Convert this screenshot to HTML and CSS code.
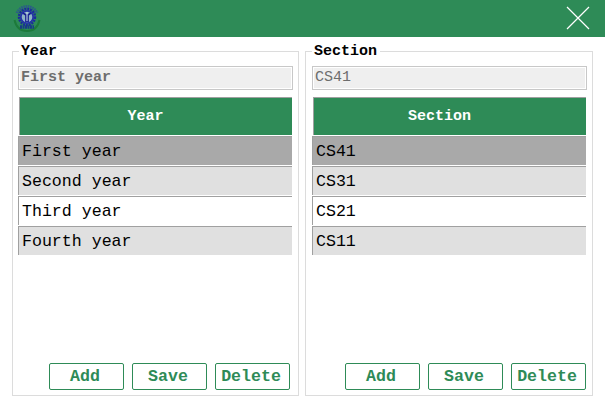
FILE: index.html
```html
<!DOCTYPE html>
<html lang="en">
<head>
<meta charset="utf-8">
<title>Year and Section</title>
<link rel="stylesheet" href="styles.css">
</head>
<body>
<header class="bar">
  <svg class="logo" width="28" height="30" viewBox="0 0 28 30" fill="none">
    <path d="M1.5 17C3 24 7 28 14 28S25 24 26.5 17" stroke="#1d7a3a" stroke-width="2"/>
    <path d="M4 10A11 11 0 0 1 24 10" stroke="#2b5c88" stroke-width="3" stroke-dasharray="1.5 .7"/>
    <circle cx="14" cy="14" r="8" stroke="#1c2a9c" stroke-width="2.4" stroke-dasharray="2 .9"/>
    <circle cx="14" cy="14" r="6.2" fill="#8fb5c4" stroke="#2434a8" stroke-width="1.8"/>
    <path d="M10 10l3 2v7M18 10l-3 2v7" stroke="#1a2393" stroke-width="1.8"/>
    <path d="M14 9v9" stroke="#c5dde0" stroke-width="1"/>
    <path d="M7 24h14" stroke="#173b87" stroke-width="3.4" stroke-dasharray="2 .5"/>
  </svg>
  <svg class="close" width="24" height="24" viewBox="0 0 24 24" fill="none" stroke="#fff" stroke-width="1.2"><path d="M1 1l22 22M23 1L1 23"/></svg>
</header>
<main class="panels">
  <fieldset class="panel">
    <legend>Year</legend>
    <input class="field strong" value="First year" disabled>
    <div class="table">
      <div class="head">Year</div>
      <div class="row selected">First year</div>
      <div class="row alt">Second year</div>
      <div class="row">Third year</div>
      <div class="row alt">Fourth year</div>
    </div>
    <div class="actions"><button>Add</button><button>Save</button><button>Delete</button></div>
  </fieldset>
  <fieldset class="panel second">
    <legend>Section</legend>
    <input class="field" value="CS41" disabled>
    <div class="table">
      <div class="head">Section</div>
      <div class="row selected">CS41</div>
      <div class="row alt">CS31</div>
      <div class="row">CS21</div>
      <div class="row alt">CS11</div>
    </div>
    <div class="actions"><button>Add</button><button>Save</button><button>Delete</button></div>
  </fieldset>
</main>
</body>
</html>
```
FILE: styles.css
```css
* { box-sizing: border-box; }
body {
  margin: 0;
  background: #fff;
  font-family: "Courier New", "Liberation Mono", monospace;
  color: #000;
  overflow: hidden;
}
.bar {
  height: 37px;
  padding: 0 15px 0 13px;
  background: #2e8b57;
  display: flex;
  align-items: center;
  justify-content: space-between;
}
.logo { margin-top: -2px; }
.close { margin-top: -2px; }
.panels {
  display: grid;
  grid-template-columns: 287px 288px;
  gap: 6px;
  padding: 6px 12px 0;
}
.panel {
  height: 353px;
  min-width: 0;
  margin: 0;
  padding: 0 5px;
  border: 1px solid #dcdcdc;
}
.second { padding-left: 6px; }
legend {
  height: 16px;
  margin-left: 1px;
  padding: 1px 3px 0 2px;
  font-size: 15px;
  font-weight: bold;
  line-height: 16px;
}
.second legend { margin-left: 0; }
.field {
  display: block;
  width: 275px;
  height: 24px;
  margin-top: 7px;
  padding: 0 2px 2px;
  border: 1px solid #c8c8c8;
  border-radius: 0;
  outline: 0;
  box-shadow: inset 0 0 0 1px #fff;
  background: #efefef;
  color: #6d6d6d;
  font: 15px "Courier New", "Liberation Mono", monospace;
}
.strong { font-weight: bold; }
.table {
  width: 275px;
  height: 266px;
  padding: 7px 1px 0 0;
}
.head {
  height: 38px;
  margin: 0 0 1px 1px;
  padding-right: 21px;
  border-top: 1px solid #a0a0a0;
  border-left: 1px solid #a0a0a0;
  background: #2e8b57;
  color: #fff;
  font-size: 15px;
  font-weight: bold;
  line-height: 37px;
  text-align: center;
}
.row {
  height: 29px;
  margin-bottom: 1px;
  padding-left: 3px;
  border-top: 1px solid #a0a0a0;
  border-left: 1px solid #a0a0a0;
  font-size: 16.6px;
  line-height: 29px;
}
.alt { background: #e0e0e0; }
.selected { background: #a9a9a9; }
.actions {
  width: 275px;
  padding: 7px 3px 0 0;
  display: flex;
  justify-content: flex-end;
  gap: 8px;
}
.second .actions { padding-right: 1px; }
button {
  width: 75px;
  height: 27px;
  padding: 0 3px 1px 0;
  border: 1px solid #2e8b57;
  border-radius: 2px;
  background: #fff;
  color: #2e8b57;
  font: bold 16.6px "Courier New", "Liberation Mono", monospace;
}
```
